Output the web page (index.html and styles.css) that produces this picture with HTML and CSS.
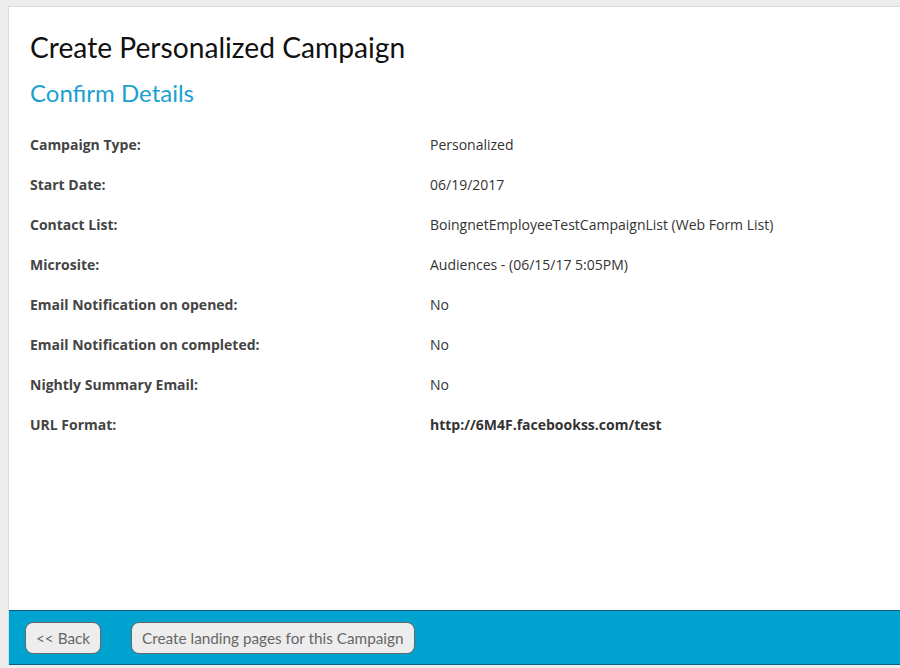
FILE: index.html
```html
<!DOCTYPE html>
<html>
<head>
<meta charset="utf-8">
<link rel="stylesheet" href="styles.css">
</head>
<body>
<div class="panel">
  <div class="content">
    <h1 class="title">Create Personalized Campaign</h1>
    <h2 class="subtitle">Confirm Details</h2>
    <div class="details">
      <div class="label">Campaign Type:</div><div class="value">Personalized</div>
      <div class="label">Start Date:</div><div class="value">06/19/2017</div>
      <div class="label">Contact List:</div><div class="value">BoingnetEmployeeTestCampaignList (Web Form List)</div>
      <div class="label">Microsite:</div><div class="value">Audiences - (06/15/17 5:05PM)</div>
      <div class="label">Email Notification on opened:</div><div class="value">No</div>
      <div class="label">Email Notification on completed:</div><div class="value">No</div>
      <div class="label">Nightly Summary Email:</div><div class="value">No</div>
      <div class="label">URL Format:</div><div class="value strong">http://6M4F.facebookss.com/test</div>
    </div>
  </div>
  <div class="footer">
    <button class="btn">&lt;&lt; Back</button>
    <button class="btn">Create landing pages for this Campaign</button>
  </div>
</div>
</body>
</html>
```
FILE: styles.css
```css
html, body {
  margin: 0;
  padding: 0;
  background: #eeeded;
  height: 668px;
  overflow: hidden;
}
body {
  padding: 6px 0 0 8px;
  box-sizing: border-box;
}
.panel {
  background: #fff;
  border-left: 1px solid #dcdcdc;
  border-top: 1px solid #dcdcdc;
  display: flex;
  flex-direction: column;
}
.content {
  height: 603px;
  padding: 0 0 0 21px;
  box-sizing: border-box;
}
.title {
  margin: 0;
  padding-top: 24px;
  font-family: Lato, sans-serif;
  font-weight: 400;
  font-size: 28.2px;
  line-height: 32px;
  color: #111;
}
.subtitle {
  margin: 0;
  padding-top: 15px;
  font-family: Lato, sans-serif;
  font-weight: 400;
  font-size: 24px;
  line-height: 30px;
  color: #1ba1cf;
}
.details {
  display: grid;
  grid-template-columns: 400px 1fr;
  grid-auto-rows: 40px;
  margin-top: 27px;
  font-family: "Open Sans", sans-serif;
  font-size: 14px;
  line-height: 20px;
}
.label {
  font-weight: 700;
  color: #444;
}
.value {
  color: #333;
}
.value.strong {
  font-weight: 700;
}
.footer {
  height: 53px;
  background: #00a3cf;
  border-top: 1px solid #0b5f7c;
  border-bottom: 1px solid #0b5f7c;
  display: flex;
  align-items: center;
  gap: 30px;
  padding-left: 16px;
}
.btn {
  height: 32px;
  padding: 0 10px;
  background: #eeeded;
  border: 1px solid #666;
  border-radius: 8px;
  font-family: Lato, sans-serif;
  font-size: 15.3px;
  color: #666;
}
```
